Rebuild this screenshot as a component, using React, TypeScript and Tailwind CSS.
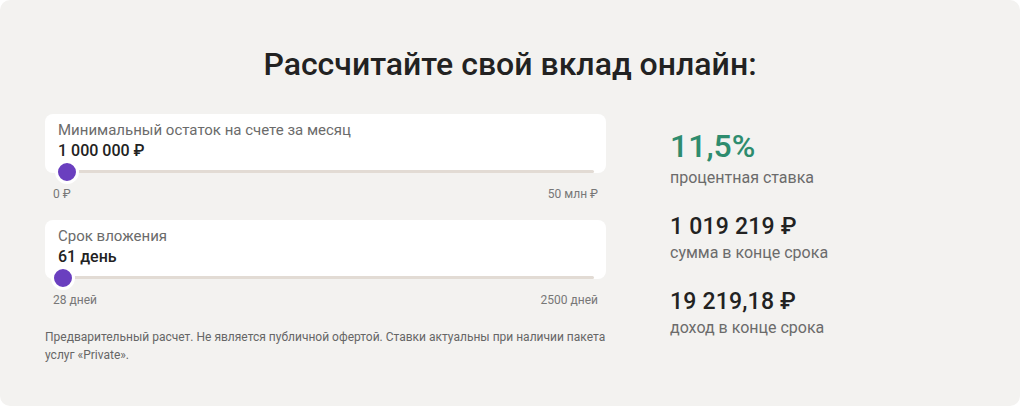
import React from "react";

function SliderCard({
  label,
  value,
  pct,
  min,
  max,
}: {
  label: string;
  value: string;
  pct: number;
  min: string;
  max: string;
}) {
  const trackWidth = 537;
  const center = 11 + pct * trackWidth;
  return (
    <div className="flex flex-col">
      <div className="relative flex flex-col rounded-[8px] bg-white pt-[6px]">
        <div className="px-[13px] text-[15px] leading-[20px] text-[#6b6b6b]">{label}</div>
        <div className="px-[13px] text-[16px] leading-[22px] font-medium text-[#222222]">{value}</div>
        <div className="mt-[8px] ml-[11px] mr-[12px] h-[3px] rounded-full bg-[#e2dbd4]" />
        <div
          className="absolute h-[24px] w-[24px] rounded-full border-[3px] border-white bg-[#6a3fbf]"
          style={{ left: center - 12, bottom: -10.5 }}
        />
      </div>
      <div className="mt-[13px] flex justify-between px-[8px] text-[12px] leading-[16px] text-[#777777]">
        <span>{min}</span>
        <span>{max}</span>
      </div>
    </div>
  );
}

function Stat({ value, label, big }: { value: string; label: string; big?: boolean }) {
  return (
    <div className="flex flex-col">
      <div
        className={
          big
            ? "text-[32px] leading-[40px] font-medium text-[#2e8c6e]"
            : "text-[23px] leading-[28px] font-medium tracking-[0.2px] text-[#222222]"
        }
      >
        {value}
      </div>
      <div className="text-[16px] leading-[24px] text-[#6b6b6b]">{label}</div>
    </div>
  );
}

export default function App() {
  return (
    <div
      className="h-[406px] w-[1020px] bg-white"
      style={{ fontFamily: "Roboto, 'Noto Sans', sans-serif" }}
    >
      <div className="flex h-full w-full flex-col rounded-[10px] bg-[#f3f2f0] pt-[44px]">
        <h1 className="text-center text-[32px] leading-[40px] font-medium text-[#222222]">
          Рассчитайте свой вклад онлайн:
        </h1>
        <div className="mt-[30px] flex gap-[64px] px-[45px]">
          <div className="flex w-[561px] flex-col">
            <SliderCard
              label="Минимальный остаток на счете за месяц"
              value="1 000 000 ₽"
              pct={0.02}
              min="0 ₽"
              max="50 млн ₽"
            />
            <div className="mt-[18px]">
              <SliderCard
                label="Срок вложения"
                value="61 день"
                pct={(61 - 28) / (2500 - 28)}
                min="28 дней"
                max="2500 дней"
              />
            </div>
            <p className="mt-[20px] text-[12px] leading-[18px] text-[#666666]">
              Предварительный расчет. Не является публичной офертой. Ставки актуальны при наличии пакета услуг «Private».
            </p>
          </div>
          <div className="flex flex-col gap-[23px] pt-[12px]">
            <Stat value="11,5%" label="процентная ставка" big />
            <Stat value="1 019 219 ₽" label="сумма в конце срока" />
            <Stat value="19 219,18 ₽" label="доход в конце срока" />
          </div>
        </div>
      </div>
    </div>
  );
}
